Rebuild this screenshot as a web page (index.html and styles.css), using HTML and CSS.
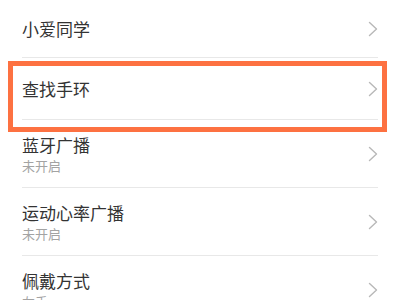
FILE: index.html
```html
<!DOCTYPE html>
<html lang="zh">
<head>
<meta charset="utf-8">
<link rel="stylesheet" href="styles.css">
</head>
<body>
<div class="page">
  <ul class="list">
    <li class="row first">
      <div class="text"><div class="title">小爱同学</div></div>
      <svg class="chev" viewBox="0 0 10 16" width="10" height="16"><path d="M1.5 1.5 L8.5 8 L1.5 14.5"/></svg>
    </li>
    <li class="row single">
      <div class="text"><div class="title">查找手环</div></div>
      <svg class="chev" viewBox="0 0 10 16" width="10" height="16"><path d="M1.5 1.5 L8.5 8 L1.5 14.5"/></svg>
    </li>
    <li class="row double">
      <div class="text"><div class="title">蓝牙广播</div><div class="sub">未开启</div></div>
      <svg class="chev" viewBox="0 0 10 16" width="10" height="16"><path d="M1.5 1.5 L8.5 8 L1.5 14.5"/></svg>
    </li>
    <li class="row double">
      <div class="text"><div class="title">运动心率广播</div><div class="sub">未开启</div></div>
      <svg class="chev" viewBox="0 0 10 16" width="10" height="16"><path d="M1.5 1.5 L8.5 8 L1.5 14.5"/></svg>
    </li>
    <li class="row double">
      <div class="text"><div class="title">佩戴方式</div><div class="sub">左手</div></div>
      <svg class="chev" viewBox="0 0 10 16" width="10" height="16"><path d="M1.5 1.5 L8.5 8 L1.5 14.5"/></svg>
    </li>
  </ul>
  <div class="highlight"></div>
</div>
</body>
</html>
```
FILE: styles.css
```css
html, body {
  margin: 0;
  padding: 0;
  background: #ffffff;
}
body {
  font-family: "Noto Sans CJK SC", "Noto Sans", sans-serif;
  width: 400px;
  height: 300px;
  overflow: hidden;
}
.page {
  position: relative;
  width: 400px;
  height: 300px;
  overflow: hidden;
}
.list {
  list-style: none;
  margin: 0;
  padding: 0;
}
.row {
  display: flex;
  align-items: center;
  justify-content: space-between;
  margin: 0 22px;
  border-bottom: 1px solid #e8e8e8;
}
.row.first { height: 57px; }
.row.single { height: 61px; }
.row.double { height: 67px; }
.text {
  display: flex;
  flex-direction: column;
}
.title {
  font-size: 17px;
  line-height: 24px;
  color: #333333;
}
.sub {
  font-size: 13px;
  line-height: 18px;
  color: #a3a3a3;
}
.chev {
  fill: none;
  stroke: #b8b8b8;
  stroke-width: 1.4;
  stroke-linecap: round;
  stroke-linejoin: round;
}
.highlight {
  position: absolute;
  left: 8px;
  top: 61px;
  width: 379px;
  height: 71px;
  box-sizing: border-box;
  border: 5px solid #fd7141;
}
```
